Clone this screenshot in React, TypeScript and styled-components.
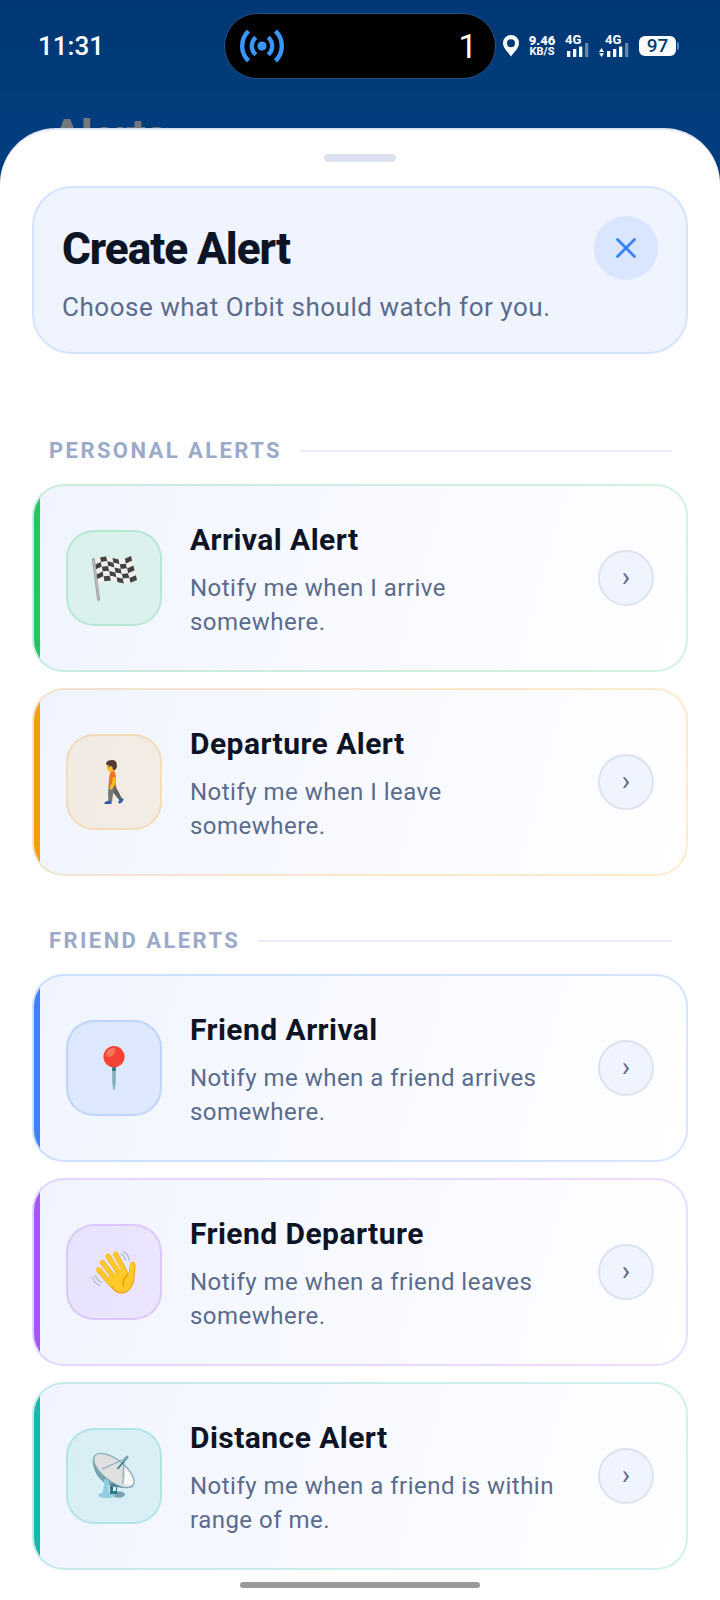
import { ReactNode } from "react";
import styled, { createGlobalStyle } from "styled-components";

type Alert = {
  title: string;
  text: string;
  accent: string;
  icon: ReactNode;
};

const COLS = 6;
const ROWS = 5;

// a point on the waving cloth, t runs along the flag and s down it
function clothPoint(t: number, s: number) {
  const x = 4 + 4 * s + t * (37 + 2 * s);
  const y = 6 + 24 * s - 4 * t - 2.5 * Math.sin(t * Math.PI * 2);
  return `${x.toFixed(2)},${y.toFixed(2)}`;
}

function clothCell(c: number, r: number) {
  return [
    clothPoint(c / COLS, r / ROWS),
    clothPoint((c + 1) / COLS, r / ROWS),
    clothPoint((c + 1) / COLS, (r + 1) / ROWS),
    clothPoint(c / COLS, (r + 1) / ROWS),
  ].join(" ");
}

function FlagIcon() {
  const cells = Array.from({ length: COLS * ROWS }, (_, i) => ({
    c: i % COLS,
    r: Math.floor(i / COLS),
  }));
  return (
    <Emoji viewBox="0 0 48 48" aria-hidden="true">
      {cells.map(({ c, r }) => (
        <polygon
          key={`${c}-${r}`}
          points={clothCell(c, r)}
          fill={(c + r) % 2 ? "#424242" : "#f5eeee"}
        />
      ))}
      <path d="M3.4 5.4 8.6 45.4" stroke="#9e9e9e" strokeWidth="3" strokeLinecap="round" />
      <path d="M3.6 6 8.6 45" stroke="#bdbdbd" strokeWidth="1.4" strokeLinecap="round" />
    </Emoji>
  );
}

function WalkIcon() {
  return (
    <Emoji viewBox="0 0 48 48" aria-hidden="true">
      <path d="M21 27h5c-.4 3 1.800 5 3 7.400L32 41l-2.400 1.400C26.500 38.500 22.600 35 22 31z" fill="#616161" />
      <path d="M18.800 27h6.400c.2 4-2.600 7.500-3 16.500h-3.700C18 37 18 32 18.800 27z" fill="#757575" />
      <path d="M14.300 45.900c0-2 1.800-2.300 4-3.100h2.900c.4 1 .3 2.100.3 3.100zM28 44.300c1-.8 1.300-2.500 2.300-3.600l1.900-.8 1.400 1.400c-.4 2-2 3.500-4 4.500z" fill="#2f5aa8" />
      <path d="M20.600 11h3.600v4h-4z" fill="#f9a825" />
      <path d="M20.500 13.700c2.500-1 4.500-.3 5 2.300.6 3.700.4 8 0 12h-6.700c-.2-5 .2-10.500 1.700-14.300z" fill="#f4711f" />
      <path d="M24 20.500c.6 3-.2 5-1.800 7.500l-1.200 2.300" fill="none" stroke="#fcc21b" strokeWidth="2.800" strokeLinecap="round" strokeLinejoin="round" />
      <path d="M17.400 5.500h7v7c-2 1.600-5 1.400-6.400.2-.7-.6-.3-1.600-.8-2.200-.8-.6-.2-1.300 0-2z" fill="#fcc21b" />
      <path d="M16.200 6.800C15.500 3.600 18.500 1.800 21 2.200c3-.8 6 1.400 5.800 4.500.6 2.700-.8 5-3 5.800-.8-1-1.500-2.300-1.500-4-1.800.4-3.800-1.600-6.100-1.700z" fill="#543930" />
      <circle cx="18.900" cy="8.700" r=".6" fill="#403020" />
    </Emoji>
  );
}

function PinIcon() {
  return (
    <Emoji viewBox="0 0 48 48" aria-hidden="true">
      <path d="M22.200 23h3.600v15L24.600 46h-1.200L22.200 38z" fill="#82aebb" />
      <path d="M22.200 22h3.600v5h-3.600z" fill="#2f7889" />
      <circle cx="24" cy="12.700" r="10.600" fill="#f44336" />
      <ellipse cx="20.800" cy="8.400" rx="5.600" ry="3.500" transform="rotate(-42 20.800 8.400)" fill="#ff7555" />
    </Emoji>
  );
}

function WaveIcon() {
  return (
    <Emoji viewBox="0 0 48 48" aria-hidden="true">
      <g stroke="#e59600" strokeWidth="5" strokeLinecap="round">
        <path d="M8.800 22 21 36M12.500 14.500 25 31M18.200 8.300 30 27M25.700 6.300 35 24" />
      </g>
      <path d="M16.500 31.500 33.500 20.500l4.800 5c1.200-2.500 1.200-6 1.600-8.500.5-4 5-4.500 5.400-1 .3 4-.5 8-.8 13.500-.2 8-5.500 16-13 16-6.500.2-10.500-6-15-14z" fill="#e59600" />
      <g stroke="#ffca28" strokeWidth="4.400" strokeLinecap="round">
        <path d="M8.400 21.500 21 36M12.100 14 25 31M17.800 7.800 30 27M25.300 5.800 35 25" />
      </g>
      <path d="M18 31 33 20.500l5.100 6c1.500-2.500 1.500-6.500 2-9.500.5-3.500 4.200-4 4.600-1 .2 4-.7 8-1 13.500-.2 7.500-5 15-12.200 15C25.500 44.500 22 38.500 18 31z" fill="#ffca28" />
      <path d="M38 26.500c-4.500 3-5.500 6.500-4.500 11" fill="none" stroke="#e59600" strokeWidth="1.300" strokeLinecap="round" />
      <g fill="none" stroke="#b0bec5" strokeWidth="1.300" strokeLinecap="round">
        <path d="M33.500 3.800c3 1 5.200 4.200 5.600 8.200M31 6c2.400 1.200 3.900 3.500 4.500 6.200M2.800 29.200c.8 4 3.500 7.200 7 8.400M5.500 27.500c.8 3 2.800 5.300 5.800 6.700" />
      </g>
    </Emoji>
  );
}

function DishIcon() {
  return (
    <Emoji viewBox="0 0 48 48" aria-hidden="true">
      <ellipse cx="28.500" cy="42.500" rx="6.500" ry="3.200" fill="#78a3ad" />
      <ellipse cx="16.500" cy="43.200" rx="8.700" ry="2.900" fill="#90cfe0" />
      <path d="M20 30h10v5h-3v7h-7z" fill="#2f7889" />
      <path d="M23 35h3v4h-3z" fill="#d8eef3" />
      <path d="M3.200 4.500C1 14 7 28 18 32.500c7 3.300 17 4 25.500 2.200z" fill="#78a3ad" />
      <path d="M20 32.500c7 2.800 16 4.200 23.500 2.200L30 29z" fill="#2f7889" />
      <path d="M14 27.500c2-1.200 4-.5 4.800 1.500v14.500H11c2.500-4 3-9 3-16z" fill="#90cfe0" />
      <ellipse cx="24" cy="18.500" rx="24.200" ry="10.800" transform="rotate(38 24 18.500)" fill="#e0e0e0" stroke="#82aebb" strokeWidth="1.200" />
      <path d="M34 14.500c6.500 6.500 10.500 14 8.700 17-1.200 1.900-5.200 1.800-9.700 0 2.700-5 3-11 1-17z" fill="#fafafa" />
      <path d="M12 17 37 6M33.900 9 32.700 32" fill="none" stroke="#82aebb" strokeWidth="1.200" />
      <path d="M27.500 17 35 8" stroke="#2f7889" strokeWidth="1.500" />
      <path d="M35 7.500 37 5.200" stroke="#78a3ad" strokeWidth="3" strokeLinecap="round" />
    </Emoji>
  );
}

const sections: { name: string; alerts: Alert[] }[] = [
  {
    name: "PERSONAL ALERTS",
    alerts: [
      {
        title: "Arrival Alert",
        text: "Notify me when I arrive somewhere.",
        accent: "#22c55e",
        icon: <FlagIcon />,
      },
      {
        title: "Departure Alert",
        text: "Notify me when I leave somewhere.",
        accent: "#f59e0b",
        icon: <WalkIcon />,
      },
    ],
  },
  {
    name: "FRIEND ALERTS",
    alerts: [
      {
        title: "Friend Arrival",
        text: "Notify me when a friend arrives somewhere.",
        accent: "#3b82f6",
        icon: <PinIcon />,
      },
      {
        title: "Friend Departure",
        text: "Notify me when a friend leaves somewhere.",
        accent: "#a855f7",
        icon: <WaveIcon />,
      },
      {
        title: "Distance Alert",
        text: "Notify me when a friend is within range of me.",
        accent: "#14b8a6",
        icon: <DishIcon />,
      },
    ],
  },
];

function StatusBar() {
  return (
    <Status>
      <Clock>11:31</Clock>
      <Island>
        <svg width="46" height="34" viewBox="0 0 46 34" fill="none" stroke="#3897ff" strokeWidth="4.400" aria-hidden="true">
          <circle cx="23" cy="17" r="4.600" fill="#3897ff" stroke="none" />
          <path d="M16.800 8.300a11.500 11.500 0 0 0 0 17.400M29.200 8.300a11.500 11.500 0 0 1 0 17.400M9.500 2.200a20.500 20.500 0 0 0 0 29.600M36.500 2.200a20.500 20.500 0 0 1 0 29.600" />
        </svg>
        <span>1</span>
      </Island>
      <Indicators>
        <svg width="16" height="22" viewBox="0 0 16 22" aria-hidden="true">
          <path
            d="M8 0a8 8 0 0 0-8 8c0 5.500 5.500 9.500 8 13.500C10.500 17.500 16 13.500 16 8a8 8 0 0 0-8-8zm0 4.200a4 4 0 1 1 0 8 4 4 0 0 1 0-8z"
            fill="#fff"
            fillRule="evenodd"
          />
        </svg>
        <Speed>
          <b>9.46</b>
          <small>KB/S</small>
        </Speed>
        <Signal>
          <span>4G</span>
          <svg width="24" height="14" viewBox="0 0 24 14" fill="#fff" aria-hidden="true">
            <path d="M2 8h3.300v6H2zM8 6h3.300v8H8zM14 3.500h3.300V14H14z" />
            <path d="M20 0h3.300v14H20z" opacity=".4" />
          </svg>
        </Signal>
        <Signal $arrows>
          <span>4G</span>
          <svg width="30" height="14" viewBox="0 0 30 14" fill="#fff" aria-hidden="true">
            <path d="m2.500 5 2.500 4H0zM2.500 14 5 10.200H0z" />
            <path d="M8 8h3.300v6H8zM14 6h3.300v8H14zM20 3.500h3.300V14H20z" />
            <path d="M26 0h3.300v14H26z" opacity=".4" />
          </svg>
        </Signal>
        <Battery>
          <span>97</span>
        </Battery>
      </Indicators>
    </Status>
  );
}

function App() {
  return (
    <Screen>
      <GlobalStyle />
      <StatusBar />
      <Backdrop>Alerts</Backdrop>
      <Sheet role="dialog" aria-labelledby="sheet-title">
        <Handle />
        <Intro>
          <IntroRow>
            <Title id="sheet-title">Create Alert</Title>
            <CloseButton type="button" aria-label="Close">
              <svg width="20" height="20" viewBox="0 0 20 20" aria-hidden="true">
                <path d="m1.500 1.500 17 17M18.500 1.500l-17 17" stroke="#3b82f6" strokeWidth="2.800" strokeLinecap="round" />
              </svg>
            </CloseButton>
          </IntroRow>
          <Subtitle>Choose what Orbit should watch for you.</Subtitle>
        </Intro>
        <Sections>
          {sections.map((section) => (
            <section key={section.name}>
              <SectionTitle>{section.name}</SectionTitle>
              <CardList>
                {section.alerts.map((alert) => (
                  <Card key={alert.title} type="button" $accent={alert.accent}>
                    <IconBox $accent={alert.accent}>{alert.icon}</IconBox>
                    <CardBody>
                      <CardTitle>{alert.title}</CardTitle>
                      <CardText>{alert.text}</CardText>
                    </CardBody>
                    <Chevron>›</Chevron>
                  </Card>
                ))}
              </CardList>
            </section>
          ))}
        </Sections>
        <HomeIndicator />
      </Sheet>
    </Screen>
  );
}

const GlobalStyle = createGlobalStyle`
  * {
    box-sizing: border-box;
  }

  body {
    margin: 0;
    font-family: Roboto, "Liberation Sans", sans-serif;
  }

  button {
    font: inherit;
    cursor: pointer;
  }
`;

const Screen = styled.div`
  min-height: 100vh;
  display: flex;
  flex-direction: column;
  background: linear-gradient(#003774, #023e7e 140px);
`;

const Status = styled.header`
  display: grid;
  grid-template-columns: 1fr 272px 1fr;
  align-items: center;
  padding-top: 13px;
  color: #fff;
`;

const Clock = styled.time`
  padding-left: 38px;
  font-size: 26px;
  font-weight: 500;
`;

const Island = styled.div`
  display: flex;
  align-items: center;
  justify-content: space-between;
  height: 66px;
  padding: 0 18px 0 14px;
  border: 1px solid #2b5288;
  border-radius: 33px;
  background: #000;
  font-size: 33px;
  font-weight: 400;
`;

const Indicators = styled.div`
  display: flex;
  align-items: center;
  gap: 10px;
  padding-left: 7px;
`;

const Speed = styled.div`
  display: flex;
  flex-direction: column;
  align-items: center;
  width: 26px;
  font-weight: 700;

  b {
    font-size: 13px;
    line-height: 11px;
  }

  small {
    font-size: 11px;
    line-height: 11px;
  }
`;

const Signal = styled.div<{ $arrows?: boolean }>`
  display: flex;
  flex-direction: column;
  font-size: 13px;
  font-weight: 700;
  line-height: 10px;

  span {
    padding-left: ${({ $arrows }) => ($arrows ? 6 : 0)}px;
  }

  svg {
    margin-top: -2px;
  }
`;

const Battery = styled.div`
  display: flex;
  align-items: center;
  gap: 1px;

  span {
    width: 37px;
    border-radius: 6px;
    background: #fff;
    color: #023c7a;
    font-size: 19px;
    font-weight: 500;
    line-height: 20px;
    text-align: center;
  }

  &::after {
    content: "";
    width: 2px;
    height: 8px;
    border-radius: 0 2px 2px 0;
    background: #5f86ae;
  }
`;

// the page title behind the sheet, which slides over its lower half
const Backdrop = styled.div`
  height: 49px;
  padding: 31px 52px 0;
  color: #74787e;
  font-size: 44px;
  font-weight: 800;
  line-height: 52px;
  letter-spacing: -1px;
`;

const Sheet = styled.main`
  position: relative;
  flex: 1;
  display: flex;
  flex-direction: column;
  padding: 24px 32px 12px;
  border-top: 2px solid #dde2f1;
  border-radius: 56px 56px 0 0;
  background: #fff;
`;

const Handle = styled.div`
  align-self: center;
  width: 72px;
  height: 8px;
  border-radius: 4px;
  background: #dde2f1;
`;

const Intro = styled.div`
  margin-top: 24px;
  padding: 28px 28px 26px;
  border: 2px solid #d4e3ff;
  border-radius: 40px;
  background: #f0f4ff;
`;

const IntroRow = styled.div`
  display: flex;
  align-items: center;
  justify-content: space-between;
`;

const Title = styled.h1`
  margin: 0;
  padding-top: 2px;
  color: #0d1426;
  font-size: 44px;
  font-weight: 800;
  letter-spacing: -1px;
`;

const CloseButton = styled.button`
  display: grid;
  place-items: center;
  width: 64px;
  height: 64px;
  padding: 0;
  border: 0;
  border-radius: 50%;
  background: #dae6ff;
`;

const Subtitle = styled.p`
  margin: 8px 0 0;
  color: #5a6b8c;
  font-size: 26px;
  line-height: 38px;
  letter-spacing: 0.02em;
`;

const Sections = styled.div`
  display: flex;
  flex-direction: column;
  gap: 52px;
  margin-top: 84px;
`;

const SectionTitle = styled.h2`
  display: flex;
  align-items: center;
  gap: 18px;
  margin: 0 16px 20px;
  padding-left: 1px;
  color: #9aaac8;
  font-size: 22px;
  font-weight: 700;
  line-height: 26px;
  letter-spacing: 0.11em;

  &::after {
    content: "";
    flex: 1;
    height: 2px;
    background: #e8ecf8;
  }
`;

const CardList = styled.div`
  display: flex;
  flex-direction: column;
  gap: 16px;
`;

const Card = styled.button<{ $accent: string }>`
  position: relative;
  display: flex;
  align-items: center;
  gap: 28px;
  width: 100%;
  min-height: 188px;
  padding: 30px 32px;
  border: 2px solid ${({ $accent }) => $accent}33;
  border-radius: 32px;
  overflow: hidden;
  background: linear-gradient(106deg, #f0f4ff, #fff) border-box;
  text-align: left;

  &::before {
    content: "";
    position: absolute;
    inset: 0 auto 0 0;
    width: 6px;
    background: ${({ $accent }) => $accent};
  }
`;

const IconBox = styled.span<{ $accent: string }>`
  flex: none;
  display: grid;
  place-items: center;
  width: 96px;
  height: 96px;
  border: 2px solid ${({ $accent }) => $accent}33;
  border-radius: 28px;
  background: ${({ $accent }) => $accent}1c;
`;

const Emoji = styled.svg`
  width: 48px;
  height: 48px;
  overflow: visible;
`;

const CardBody = styled.span`
  flex: 1;
  display: flex;
  flex-direction: column;
  gap: 8px;
`;

const CardTitle = styled.span`
  color: #0d1426;
  font-size: 30px;
  font-weight: 700;
  line-height: 46px;
  letter-spacing: 0.015em;
`;

const CardText = styled.span`
  color: #5a6b8c;
  font-size: 24px;
  line-height: 34px;
  letter-spacing: 0.02em;
`;

const Chevron = styled.span`
  flex: none;
  width: 56px;
  height: 56px;
  border: 2px solid #dde2f1;
  border-radius: 50%;
  background: #f0f4ff;
  color: #5a6b8c;
  font-size: 28px;
  line-height: 50px;
  text-align: center;
`;

const HomeIndicator = styled.div`
  align-self: center;
  width: 240px;
  height: 6px;
  margin-top: 12px;
  border-radius: 3px;
  background: #999;
`;

export default App;
